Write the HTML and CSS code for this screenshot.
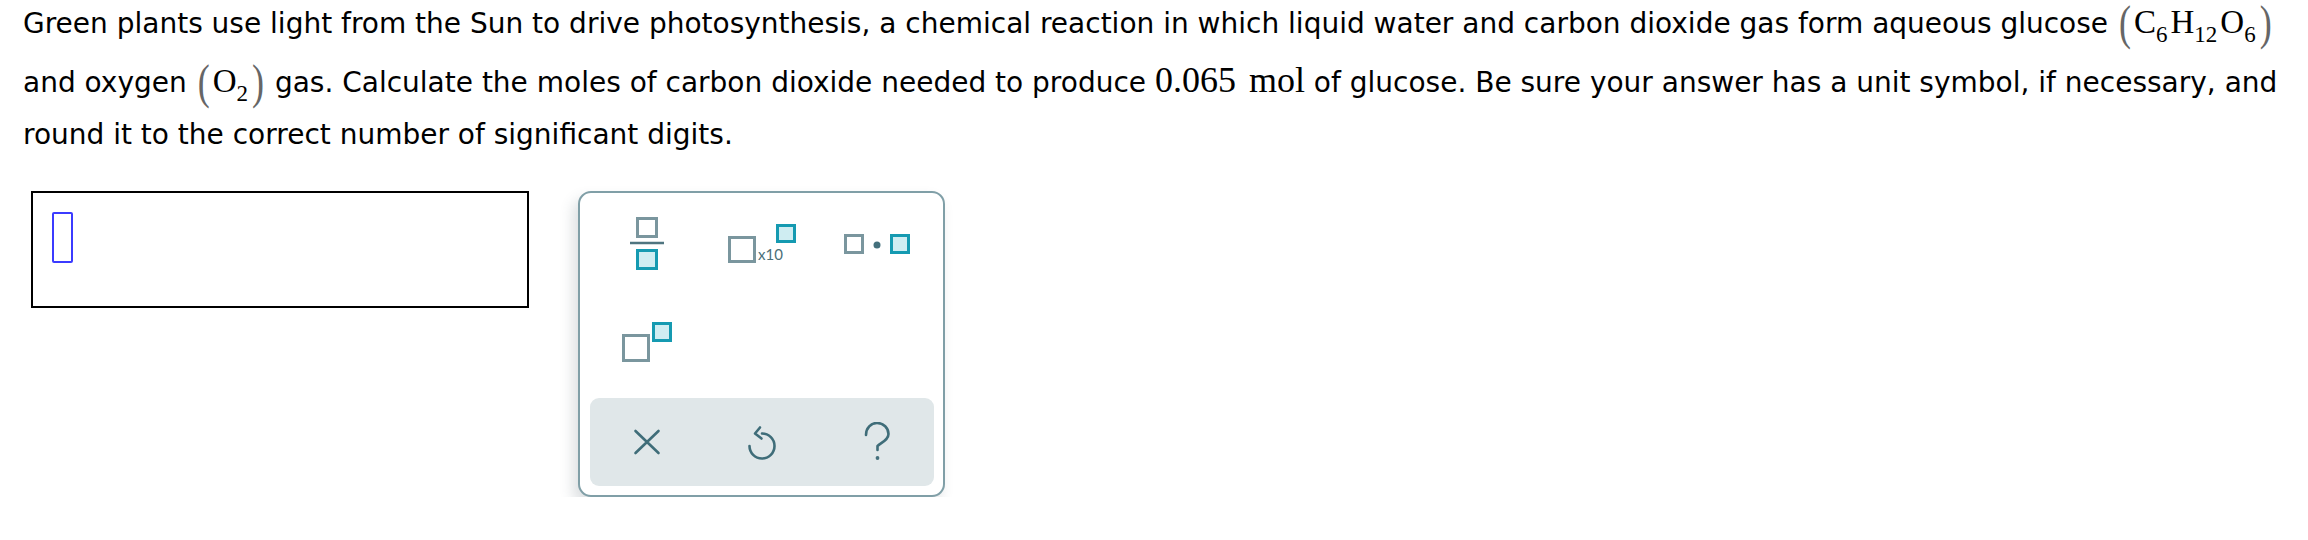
FILE: index.html
```html
<!DOCTYPE html>
<html lang="en">
<head>
<meta charset="utf-8">
<title>Question</title>
<link rel="stylesheet" href="styles.css">
</head>
<body>
<div class="page">
  <p class="question">Green plants use light from the Sun to drive photosynthesis, a chemical reaction in which liquid water and carbon dioxide gas form aqueous glucose <span class="chem"><span class="paren">(</span><span class="el">C</span><sub>6</sub><span class="el">H</span><sub>12</sub><span class="el">O</span><sub>6</sub><span class="paren">)</span></span> and oxygen <span class="chem"><span class="paren">(</span><span class="el">O</span><sub>2</sub><span class="paren">)</span></span> gas. Calculate the moles of carbon dioxide needed to produce <span class="qty"><span class="num">0.065</span><span class="unit">mol</span></span> of glucose. Be sure your answer has a unit symbol, if necessary, and round it to the correct number of significant digits.</p>

  <div class="work">
    <div class="answer"><span class="cursor"></span></div>

    <div class="panel">
      <div class="keys">
        <button class="key" aria-label="fraction">
          <svg width="34" height="54" viewBox="0 0 34 54">
            <rect x="7.5" y="1.5" width="19" height="18" class="sq-grey"/>
            <line x1="0" y1="26" x2="34" y2="26" class="bar"/>
            <rect x="7.5" y="33.5" width="19" height="18" class="sq-teal"/>
          </svg>
        </button>
        <button class="key" aria-label="scientific notation">
          <svg width="68" height="40" viewBox="0 0 68 40">
            <rect x="1.5" y="13.5" width="25" height="24" class="sq-grey"/>
            <text x="30" y="36" class="x10">x10</text>
            <rect x="49.5" y="1.5" width="17" height="16" class="sq-teal"/>
          </svg>
        </button>
        <button class="key" aria-label="multiply">
          <svg width="66" height="20" viewBox="0 0 66 20">
            <rect x="1.5" y="1.5" width="17" height="17" class="sq-grey"/>
            <circle cx="33" cy="11" r="3.5" class="dot"/>
            <rect x="47.5" y="1.5" width="17" height="17" class="sq-teal"/>
          </svg>
        </button>
        <button class="key" aria-label="superscript">
          <svg width="50" height="40" viewBox="0 0 50 40">
            <rect x="1.5" y="13.5" width="25" height="25" class="sq-grey"/>
            <rect x="31.5" y="1.5" width="17" height="17" class="sq-teal"/>
          </svg>
        </button>
      </div>

      <div class="actions">
        <button class="action" aria-label="clear">
          <svg width="40" height="40" viewBox="-20 -20 40 40">
            <path d="M-11.5 -11 L11.5 11 M11.5 -11 L-11.5 11" class="stroke"/>
          </svg>
        </button>
        <button class="action" aria-label="undo">
          <svg width="40" height="40" viewBox="-20 -20 40 40">
            <path d="M0 -8.5 A12.5 12.5 0 1 1 -12.5 4" class="stroke"/>
            <path d="M-2 -14.5 L-7 -8.5 L-0.5 -3.5" class="stroke"/>
          </svg>
        </button>
        <button class="action" aria-label="help">
          <svg width="40" height="40" viewBox="-20 -20 40 40">
            <path d="M-11 -7 C-11 -14 -6 -19 0 -19 C6.5 -19 11.5 -14 11.5 -8 C11.5 -2 5 0 0.5 4 L0.5 8" class="stroke"/>
            <circle cx="0.5" cy="16" r="1.9" class="dot"/>
          </svg>
        </button>
      </div>
    </div>
  </div>
</div>
</body>
</html>
```

FILE: styles.css
```css
html, body {
  margin: 0;
  padding: 0;
  background: #ffffff;
}

.page {
  padding: 0 0 0 23px;
  font-family: "DejaVu Sans", Verdana, sans-serif;
  color: #000000;
}

.question {
  margin: 0;
  font-size: 28px;
  line-height: 48px;
}

.chem,
.qty {
  font-family: "Liberation Serif", "Times New Roman", serif;
  white-space: nowrap;
}

.chem {
  font-size: 33px;
  line-height: 0;
}

.el {
  margin-left: 1px;
}

.chem sub {
  font-size: 23px;
  line-height: 0;
  vertical-align: -9px;
  margin-right: 2px;
}

.paren {
  display: inline-block;
  font-size: 36px;
  line-height: 0;
  color: #666666;
  transform: scaleY(1.35);
  vertical-align: -2px;
  margin: 0 2px;
}

.qty {
  display: inline-block;
  font-size: 36px;
  line-height: 48px;
  padding: 8px 0 7px;
}

.unit {
  margin-left: 13px;
}

.work {
  display: flex;
  align-items: flex-start;
  gap: 49px;
  margin-top: 32px;
  padding-left: 8px;
}

.answer {
  border: 2px solid #000000;
  padding: 19px 0 0 19px;
  width: 475px;
  height: 94px;
}

.cursor {
  display: block;
  width: 17px;
  height: 47px;
  border: 2px solid #3b3bff;
  border-radius: 2px;
}

.panel {
  width: 344px;
  padding: 6px 9px 9px 10px;
  border: 2px solid #809fa7;
  border-radius: 13px;
  background: #ffffff;
  box-shadow: -5px 8px 14px rgba(60, 80, 90, 0.18);
}

.keys {
  display: grid;
  grid-template-columns: repeat(3, 1fr);
  grid-auto-rows: 90px;
  row-gap: 8px;
  margin-bottom: 11px;
}

.key,
.action {
  display: flex;
  align-items: center;
  justify-content: center;
  border: 0;
  background: transparent;
  padding: 0;
  margin: 0;
}

.actions {
  display: grid;
  grid-template-columns: repeat(3, 1fr);
  height: 88px;
  background: #e0e7e9;
  border-radius: 9px;
}

.sq-grey {
  fill: #ffffff;
  stroke: #7a969e;
  stroke-width: 3;
}

.sq-teal {
  fill: #cfedf2;
  stroke: #159ab1;
  stroke-width: 3;
}

.bar {
  stroke: #4f7580;
  stroke-width: 2.6;
}

.x10 {
  font-family: "Lato", "Open Sans", sans-serif;
  font-size: 15px;
  fill: #4a6f79;
}

.dot {
  fill: #44707c;
}

.stroke {
  fill: none;
  stroke: #3f6d79;
  stroke-width: 2.6;
  stroke-linecap: round;
  stroke-linejoin: round;
}
```
